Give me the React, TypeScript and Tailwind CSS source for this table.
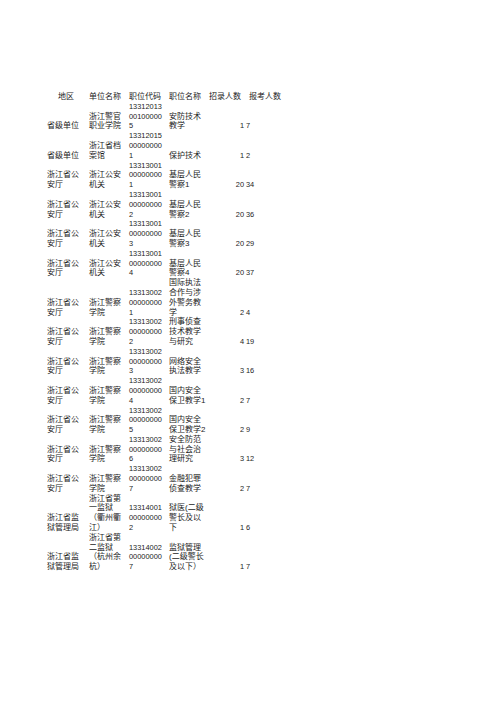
import React from 'react';

type Row = {
  lines: number;
  area: string[];
  unit: string[];
  code: string[];
  title: string[];
  hire: string;
  apply: string;
};

const rows: Row[] = [
  { lines: 3, area: ['省级单位'], unit: ['浙江警官', '职业学院'], code: ['13312013', '00100000', '5'], title: ['安防技术', '教学'], hire: '1', apply: '7' },
  { lines: 3, area: ['省级单位'], unit: ['浙江省档', '案馆'], code: ['13312015', '00000000', '1'], title: ['保护技术'], hire: '1', apply: '2' },
  { lines: 3, area: ['浙江省公', '安厅'], unit: ['浙江公安', '机关'], code: ['13313001', '00000000', '1'], title: ['基层人民', '警察1'], hire: '20', apply: '34' },
  { lines: 3, area: ['浙江省公', '安厅'], unit: ['浙江公安', '机关'], code: ['13313001', '00000000', '2'], title: ['基层人民', '警察2'], hire: '20', apply: '36' },
  { lines: 3, area: ['浙江省公', '安厅'], unit: ['浙江公安', '机关'], code: ['13313001', '00000000', '3'], title: ['基层人民', '警察3'], hire: '20', apply: '29' },
  { lines: 3, area: ['浙江省公', '安厅'], unit: ['浙江公安', '机关'], code: ['13313001', '00000000', '4'], title: ['基层人民', '警察4'], hire: '20', apply: '37' },
  { lines: 4, area: ['浙江省公', '安厅'], unit: ['浙江警察', '学院'], code: ['13313002', '00000000', '1'], title: ['国际执法', '合作与涉', '外警务教', '学'], hire: '2', apply: '4' },
  { lines: 3, area: ['浙江省公', '安厅'], unit: ['浙江警察', '学院'], code: ['13313002', '00000000', '2'], title: ['刑事侦查', '技术教学', '与研究'], hire: '4', apply: '19' },
  { lines: 3, area: ['浙江省公', '安厅'], unit: ['浙江警察', '学院'], code: ['13313002', '00000000', '3'], title: ['网络安全', '执法教学'], hire: '3', apply: '16' },
  { lines: 3, area: ['浙江省公', '安厅'], unit: ['浙江警察', '学院'], code: ['13313002', '00000000', '4'], title: ['国内安全', '保卫教学1'], hire: '2', apply: '7' },
  { lines: 3, area: ['浙江省公', '安厅'], unit: ['浙江警察', '学院'], code: ['13313002', '00000000', '5'], title: ['国内安全', '保卫教学2'], hire: '2', apply: '9' },
  { lines: 3, area: ['浙江省公', '安厅'], unit: ['浙江警察', '学院'], code: ['13313002', '00000000', '6'], title: ['安全防范', '与社会治', '理研究'], hire: '3', apply: '12' },
  { lines: 3, area: ['浙江省公', '安厅'], unit: ['浙江警察', '学院'], code: ['13313002', '00000000', '7'], title: ['金融犯罪', '侦查教学'], hire: '2', apply: '7' },
  { lines: 4, area: ['浙江省监', '狱管理局'], unit: ['浙江省第', '一监狱', '（衢州衢', '江）'], code: ['13314001', '00000000', '2'], title: ['狱医(二级', '警长及以', '下'], hire: '1', apply: '6' },
  { lines: 4, area: ['浙江省监', '狱管理局'], unit: ['浙江省第', '二监狱', '（杭州余', '杭）'], code: ['13314002', '00000000', '7'], title: ['监狱管理', '(二级警长', '及以下）'], hire: '1', apply: '7' },
];

function Cell({ lines, className = '' }: { lines: string[]; className?: string }) {
  return (
    <div className={`flex flex-col justify-end whitespace-nowrap ${className}`}>
      {lines.map((l, i) => (
        <div key={i}>{l}</div>
      ))}
    </div>
  );
}

const cols = 'grid grid-cols-[42px_40px_40px_40px_35px_40px]';

export default function App() {
  return (
    <div
      className="min-h-[702px] w-[496px] bg-white pt-[92px] pl-[47px] text-[8px] leading-[9.8px] text-[#1c1c1c]"
      style={{ fontFamily: '"Liberation Sans", "Noto Sans CJK SC", sans-serif' }}
    >
      <div className={cols}>
        <div className="pl-[11px]">地区</div>
        <div>单位名称</div>
        <div>职位代码</div>
        <div>职位名称</div>
        <div>招录人数</div>
        <div className="pl-[5px]">报考人数</div>
      </div>
      {rows.map((r, i) => (
        <div key={i} className={`${cols} ${r.lines === 4 ? 'h-[39.2px]' : 'h-[29.4px]'}`}>
          <Cell lines={r.area} />
          <Cell lines={r.unit} />
          <Cell lines={r.code} className="text-[7.4px]" />
          <Cell lines={r.title} />
          <Cell lines={[r.hire]} className="items-end text-[7.4px]" />
          <Cell lines={[r.apply]} className="pl-[2px] text-[7.4px]" />
        </div>
      ))}
    </div>
  );
}
